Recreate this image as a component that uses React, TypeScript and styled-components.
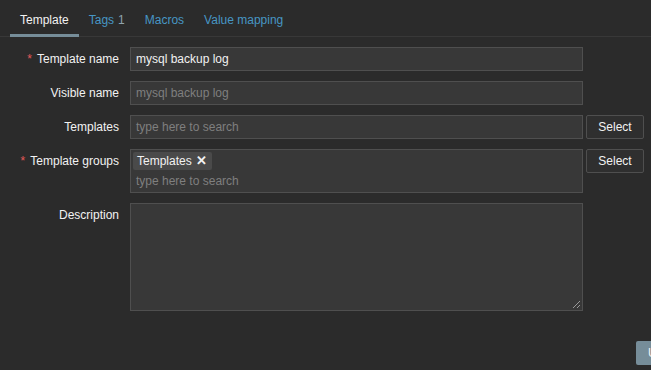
import React from 'react'
import styled, { createGlobalStyle } from 'styled-components'

const GlobalStyle = createGlobalStyle`
  html, body {
    margin: 0;
    padding: 0;
    overflow: hidden;
    background: #2b2b2b;
  }
  body {
    font-family: 'Liberation Sans', Arial, sans-serif;
    font-size: 12px;
    line-height: 14px;
    color: #f2f2f2;
  }
`

const Page = styled.div`
  width: 651px;
  height: 370px;
  overflow: hidden;
  background: #2b2b2b;
`

const TabBar = styled.div`
  display: flex;
  height: 37px;
  box-sizing: border-box;
  padding-left: 10px;
  border-bottom: 1px solid #383838;
`

const Tab = styled.div<{ active?: boolean }>`
  height: 37px;
  margin-bottom: -1px;
  box-sizing: border-box;
  padding: 13px 10px 0;
  white-space: nowrap;
  color: ${props => (props.active ? '#f2f2f2' : '#4796c4')};
  border-bottom: 3px solid ${props => (props.active ? '#768d99' : 'transparent')};
`

const TabCount = styled.span`
  color: #8fa3ad;
  margin-left: 4px;
`

const Form = styled.div`
  display: flex;
  flex-direction: column;
  gap: 10px;
  padding-top: 10px;
`

const Row = styled.div`
  display: flex;
  align-items: flex-start;
`

const Label = styled.div`
  flex: 0 0 120px;
  box-sizing: border-box;
  padding: 5px 1px 0 0;
  text-align: right;
  white-space: nowrap;
`

const Required = styled.span`
  color: #e45959;
  margin-right: 5px;
`

const Control = styled.div`
  display: flex;
  align-items: flex-start;
  gap: 3px;
  margin-left: 10px;
`

const TextInput = styled.div<{ muted?: boolean }>`
  width: 453px;
  height: 24px;
  box-sizing: border-box;
  padding: 4px 5px;
  background: #383838;
  border: 1px solid #4f4f4f;
  color: ${props => (props.muted ? '#7f7f7f' : '#f2f2f2')};
  white-space: nowrap;
`

const Placeholder = styled.span`
  color: #7f7f7f;
`

const MultiSelect = styled.div`
  width: 453px;
  height: 44px;
  box-sizing: border-box;
  padding: 2px;
  background: #383838;
  border: 1px solid #4f4f4f;
`

const Chip = styled.span`
  display: inline-flex;
  align-items: center;
  gap: 4px;
  height: 18px;
  padding: 0 5px 0 4px;
  border-radius: 2px;
  background: #4a4a4a;
  color: #f2f2f2;
`

const ChipClose = styled.span`
  font-size: 13px;
  font-weight: bold;
`

const SearchLine = styled.div`
  padding: 4px 3px 0;
  color: #7f7f7f;
`

const SelectButton = styled.button`
  width: 58px;
  height: 24px;
  padding: 0;
  background: #2f2f2f;
  border: 1px solid #4f4f4f;
  border-radius: 2px;
  color: #f2f2f2;
  font-family: inherit;
  font-size: 12px;
`

const TextArea = styled.div`
  position: relative;
  width: 453px;
  height: 108px;
  box-sizing: border-box;
  background: #383838;
  border: 1px solid #4f4f4f;
`

const Grip = styled.svg`
  position: absolute;
  right: 1px;
  bottom: 1px;
`

const Footer = styled.div`
  display: flex;
  margin-top: 30px;
  padding-left: 636px;
`

const PrimaryButton = styled.button`
  flex: 0 0 auto;
  height: 24px;
  padding: 0 12px;
  background: #768d99;
  border: 0;
  border-radius: 2px;
  color: #f2f2f2;
  font-family: inherit;
  font-size: 12px;
`

export default function App() {
  return (
    <Page>
      <GlobalStyle />
      <TabBar>
        <Tab active>Template</Tab>
        <Tab>
          Tags<TabCount>1</TabCount>
        </Tab>
        <Tab>Macros</Tab>
        <Tab>Value mapping</Tab>
      </TabBar>
      <Form>
        <Row>
          <Label>
            <Required>*</Required>Template name
          </Label>
          <Control>
            <TextInput>mysql backup log</TextInput>
          </Control>
        </Row>
        <Row>
          <Label>Visible name</Label>
          <Control>
            <TextInput muted>mysql backup log</TextInput>
          </Control>
        </Row>
        <Row>
          <Label>Templates</Label>
          <Control>
            <TextInput>
              <Placeholder>type here to search</Placeholder>
            </TextInput>
            <SelectButton>Select</SelectButton>
          </Control>
        </Row>
        <Row>
          <Label>
            <Required>*</Required>Template groups
          </Label>
          <Control>
            <MultiSelect>
              <Chip>
                Templates<ChipClose>✕</ChipClose>
              </Chip>
              <SearchLine>type here to search</SearchLine>
            </MultiSelect>
            <SelectButton>Select</SelectButton>
          </Control>
        </Row>
        <Row>
          <Label>Description</Label>
          <Control>
            <TextArea>
              <Grip width="9" height="9" viewBox="0 0 9 9">
                <path d="M8 1 L1 8 M8 5 L5 8" stroke="#9a9a9a" strokeWidth="1" />
              </Grip>
            </TextArea>
          </Control>
        </Row>
      </Form>
      <Footer>
        <PrimaryButton>Update</PrimaryButton>
      </Footer>
    </Page>
  )
}
